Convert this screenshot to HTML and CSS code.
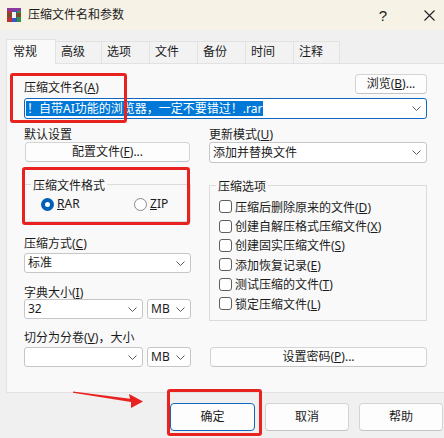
FILE: index.html
```html
<!DOCTYPE html>
<html lang="zh-CN">
<head>
  <meta charset="UTF-8" />
  <title>压缩文件名和参数</title>
  <link rel="stylesheet" href="styles.css">
</head>
<body>
  <div class="titlebar">
    <svg class="app-icon" viewBox="0 0 16 16">
      <rect x="1" y="1" width="5" height="14" fill="#b8322f"/>
      <rect x="6" y="1" width="5" height="14" fill="#3a56c2"/>
      <rect x="11" y="1" width="4" height="14" fill="#2f9446"/>
      <rect x="1" y="1" width="14" height="3" fill="#8c3a9c"/>
      <rect x="1" y="6" width="14" height="4" fill="#7b4a2a"/>
      <rect x="6" y="5" width="4" height="6" fill="#f4f4f4"/>
    </svg>
    <span class="title">压缩文件名和参数</span>
    <div class="title-actions">
      <span class="title-btn help">?</span>
      <span class="title-btn">
        <svg width="11" height="11" viewBox="0 0 11 11"><path d="M0.5 0.5 L10.5 10.5 M10.5 0.5 L0.5 10.5" stroke="#1f1f1f" stroke-width="1.1" fill="none"/></svg>
      </span>
    </div>
  </div>

  <div class="tabs">
    <div class="tab active">常规</div>
    <div class="tab narrow">高级</div>
    <div class="tab">选项</div>
    <div class="tab">文件</div>
    <div class="tab">备份</div>
    <div class="tab">时间</div>
    <div class="tab narrow">注释</div>
  </div>

  <div class="panel">
    <div class="content">
      <div class="name-row">
        <span class="label">压缩文件名(<u>A</u>)</span>
        <button class="btn browse">浏览(<u>B</u>)...</button>
      </div>
      <div class="combo focus name-combo">
        <span class="selected-text">！自带AI功能的浏览器，一定不要错过！.rar</span>
        <svg class="chev" width="9" height="5" viewBox="0 0 9 5"><path d="M0.5 0.5 L4.5 4.5 L8.5 0.5" stroke="#5a5a5a" fill="none"/></svg>
      </div>

      <div class="cols">
        <div class="col">
          <div class="label mt8">默认设置</div>
          <button class="btn profile">配置文件(<u>F</u>)...</button>

          <div class="group format">
            <span class="group-title">压缩文件格式</span>
            <div class="radio-row">
              <span class="radio-item first"><span class="radio checked"></span><span><u>R</u>AR</span></span>
              <span class="radio-item"><span class="radio"></span><span><u>Z</u>IP</span></span>
            </div>
          </div>

          <div class="label mt14">压缩方式(<u>C</u>)</div>
          <div class="combo mt2">
            <span>标准</span>
            <svg class="chev" width="9" height="5" viewBox="0 0 9 5"><path d="M0.5 0.5 L4.5 4.5 L8.5 0.5" stroke="#5a5a5a" fill="none"/></svg>
          </div>

          <div class="label mt12">字典大小(<u>I</u>)</div>
          <div class="combo-row mtn1">
            <div class="combo size">
              <span>32</span>
              <svg class="chev" width="9" height="5" viewBox="0 0 9 5"><path d="M0.5 0.5 L4.5 4.5 L8.5 0.5" stroke="#5a5a5a" fill="none"/></svg>
            </div>
            <div class="combo unit">
              <span>MB</span>
              <svg class="chev" width="9" height="5" viewBox="0 0 9 5"><path d="M0.5 0.5 L4.5 4.5 L8.5 0.5" stroke="#5a5a5a" fill="none"/></svg>
            </div>
          </div>

          <div class="label mt11">切分为分卷(<u>V</u>)，大小</div>
          <div class="combo-row mt2">
            <div class="combo size">
              <span></span>
              <svg class="chev" width="9" height="5" viewBox="0 0 9 5"><path d="M0.5 0.5 L4.5 4.5 L8.5 0.5" stroke="#5a5a5a" fill="none"/></svg>
            </div>
            <div class="combo unit">
              <span>MB</span>
              <svg class="chev" width="9" height="5" viewBox="0 0 9 5"><path d="M0.5 0.5 L4.5 4.5 L8.5 0.5" stroke="#5a5a5a" fill="none"/></svg>
            </div>
          </div>
        </div>

        <div class="col">
          <div class="label mt8">更新模式(<u>U</u>)</div>
          <div class="combo tall">
            <span>添加并替换文件</span>
            <svg class="chev" width="9" height="5" viewBox="0 0 9 5"><path d="M0.5 0.5 L4.5 4.5 L8.5 0.5" stroke="#5a5a5a" fill="none"/></svg>
          </div>

          <div class="group options">
            <span class="group-title">压缩选项</span>
            <div class="check-row"><span class="check"></span><span>压缩后删除原来的文件(<u>D</u>)</span></div>
            <div class="check-row"><span class="check"></span><span>创建自解压格式压缩文件(<u>X</u>)</span></div>
            <div class="check-row"><span class="check"></span><span>创建固实压缩文件(<u>S</u>)</span></div>
            <div class="check-row"><span class="check"></span><span>添加恢复记录(<u>E</u>)</span></div>
            <div class="check-row"><span class="check"></span><span>测试压缩的文件(<u>T</u>)</span></div>
            <div class="check-row"><span class="check"></span><span>锁定压缩文件(<u>L</u>)</span></div>
          </div>

          <button class="btn password">设置密码(<u>P</u>)...</button>
        </div>
      </div>
    </div>
  </div>

  <div class="actions">
    <button class="btn action default">确定</button>
    <button class="btn action">取消</button>
    <button class="btn action">帮助</button>
  </div>

  <!-- 标注 -->
  <div class="mark mark-name"></div>
  <div class="mark mark-format"></div>
  <div class="mark mark-ok"></div>
  <svg class="arrow" width="76" height="22" viewBox="0 0 76 22">
    <polygon points="3,3.4 60,10.8 59,6 73,13.6 61,20 61,14 3,4.8" fill="#e8221f"/>
  </svg>
</body>
</html>
```

FILE: styles.css
```css
* {
  box-sizing: border-box;
}
body {
  margin: 0;
  width: 444px;
  height: 438px;
  overflow: hidden;
  position: relative;
  background: #f0f0f0;
  font-family: "Noto Sans", "Noto Sans CJK SC", sans-serif;
  font-size: 12px;
  color: #1b1b1b;
}
u {
  text-underline-offset: 1px;
}

/* title bar */
.titlebar {
  width: 452px;
  height: 30px;
  background: #f6f2e6;
  display: flex;
  align-items: center;
  padding-left: 6px;
}
.app-icon {
  width: 16px;
  height: 16px;
  margin-right: 6px;
}
.title {
  line-height: 16px;
}
.title-actions {
  margin-left: auto;
  display: flex;
}
.title-btn {
  width: 46px;
  height: 30px;
  display: flex;
  align-items: center;
  justify-content: center;
}
.help {
  font-family: "Liberation Sans", sans-serif;
  font-size: 15px;
}

/* tabs */
.tabs {
  display: flex;
  align-items: flex-end;
  height: 24px;
  margin-top: 9px;
  padding-left: 6px;
  position: relative;
  z-index: 1;
}
.tab {
  width: 48px;
  height: 22px;
  line-height: 20px;
  padding-left: 5px;
  border-top: 1px solid #e2e2e2;
  border-right: 1px solid #e2e2e2;
  background: #f2f2f2;
}
.tab.narrow {
  width: 46px;
}
.tab.active {
  width: 50px;
  height: 25px;
  margin-bottom: -1px;
  line-height: 23px;
  padding-left: 6px;
  border-left: 1px solid #e2e2e2;
  background: #f9f9f9;
}

/* panel */
.panel {
  margin-left: 6px;
  width: 446px;
  height: 330px;
  border: 1px solid #e2e2e2;
  background: #f9f9f9;
  padding: 10px 0 0 17px;
}
.content {
  width: 403px;
}
.label {
  line-height: 15px;
  height: 15px;
  white-space: nowrap;
}
.mt2 { margin-top: 2px; }
.mt8 { margin-top: 8px; }
.mt11 { margin-top: 11px; }
.mt12 { margin-top: 12px; }
.mt14 { margin-top: 14px; }
.mtn1 { margin-top: -1px; }

.name-row {
  display: flex;
  justify-content: space-between;
  align-items: flex-end;
  height: 20px;
}
.name-row .label {
  margin-bottom: -2px;
  line-height: 16px;
  height: 16px;
}

.btn {
  font-family: inherit;
  font-size: 12px;
  color: #1b1b1b;
  background: #fdfdfd;
  border: 1px solid #d4d4d4;
  border-bottom-color: #c4c4c4;
  border-radius: 4px;
  height: 20px;
  padding: 0;
  line-height: 18px;
  text-align: center;
}
.browse {
  width: 72px;
}
.profile {
  display: block;
  width: 165px;
  margin-left: 1px;
}
.password {
  display: block;
  width: 217px;
  margin-left: 1px;
  margin-top: 26px;
}

.combo {
  height: 20px;
  background: #ffffff;
  border: 1px solid #c6c6c6;
  border-radius: 3px;
  display: flex;
  align-items: center;
  justify-content: space-between;
  padding: 0 5px 0 3px;
  line-height: 16px;
}
.combo.tall {
  height: 21px;
}
.name-combo {
  margin-top: 4px;
  height: 21px;
  padding-left: 1px;
}
.combo.focus {
  border-color: #1167bd;
}
.selected-text {
  background: #0078d7;
  color: #ffffff;
  padding: 0 1px;
  line-height: 15px;
}
.chev {
  flex: none;
}

.cols {
  display: grid;
  grid-template-columns: 167px 218px;
  column-gap: 18px;
}
.combo-row {
  display: flex;
  gap: 4px;
}
.combo.size {
  width: 119px;
}
.combo.unit {
  width: 44px;
}

/* group boxes */
.group {
  position: relative;
  border: 1px solid #dcdcdc;
}
.group-title {
  position: absolute;
  top: -7px;
  left: 6px;
  padding: 0 2px;
  line-height: 15px;
  background: #f9f9f9;
}
.format {
  margin-top: 22px;
  height: 38px;
  padding: 12px 0 0 16px;
}
.radio-row {
  display: flex;
  height: 14px;
}
.radio-item {
  flex: none;
  display: flex;
  align-items: center;
  gap: 3px;
  line-height: 14px;
}
.radio-item.first {
  width: 93px;
}
.radio {
  flex: none;
  width: 13px;
  height: 13px;
  border-radius: 50%;
  border: 1px solid #8a8a8a;
  background: #ffffff;
}
.radio.checked {
  border: 4px solid #005fb8;
  background: #ffffff;
}
.options {
  margin-top: 22px;
  height: 136px;
  padding: 11px 0 0 9px;
}
.check-row {
  height: 19.4px;
  display: flex;
  align-items: center;
  gap: 3px;
  white-space: nowrap;
}
.check {
  flex: none;
  width: 13px;
  height: 13px;
  border: 1px solid #5e5e5e;
  border-radius: 3px;
  background: #ffffff;
}

/* bottom buttons */
.actions {
  display: flex;
  gap: 10px;
  padding-left: 170px;
  margin-top: 10px;
}
.btn.action {
  width: 84px;
  height: 28px;
  line-height: 26px;
}
.btn.default {
  width: 85px;
  border-color: #1167bd;
}

/* red annotations */
.mark {
  position: absolute;
  border: 3px solid #e8221f;
  border-radius: 3px;
}
.mark-name {
  left: 10px;
  top: 73px;
  width: 117px;
  height: 50px;
}
.mark-format {
  left: 22px;
  top: 167px;
  width: 168px;
  height: 58px;
}
.mark-ok {
  left: 167px;
  top: 389px;
  width: 95px;
  height: 47px;
}
.arrow {
  position: absolute;
  left: 70px;
  top: 388px;
}
```
